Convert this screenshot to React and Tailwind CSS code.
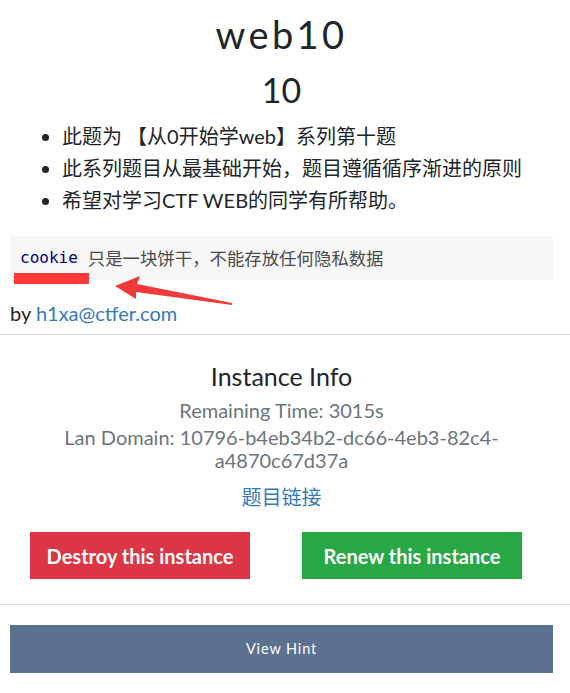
import React from 'react';

export default function App() {
  return (
    <div className="min-h-screen bg-white text-[#212529] font-['Lato','Noto_Sans_CJK_SC',sans-serif]">
      <div className="relative">
        <div className="ml-[10px] w-[543px]">
          <h1 className="text-center text-[38px] leading-[44px] pt-[12px] tracking-[0.09em] font-normal">web10</h1>
          <h2 className="text-center text-[34px] leading-[40px] mt-[14px]">10</h2>

          <ul className="list-disc pl-[52px] mt-[10px] text-[20px] leading-[32px] text-[#212529]">
            <li>此题为 【从0开始学web】系列第十题</li>
            <li>此系列题目从最基础开始，题目遵循循序渐进的原则</li>
            <li>希望对学习CTF WEB的同学有所帮助。</li>
          </ul>

          <div className="mt-[20px] bg-[#f7f7f7] h-[44px] flex items-center px-[10px]">
            <code className="font-['DejaVu_Sans_Mono',monospace] text-[#000080] text-[16px]">cookie</code>
            <span className="ml-[10px] text-[#4a4a4a] font-['Noto_Sans_CJK_SC',serif] text-[17.4px]">只是一块饼干，不能存放任何隐私数据</span>
          </div>

          <p className="mt-[21px] text-[20px] leading-[24px]">
            by <a className="text-[#337ab7]">h1xa@ctfer.com</a>
          </p>
        </div>

        {/* annotation overlay */}
        <div className="absolute left-[14px] top-[273px] w-[75px] h-[11px] bg-[#ff3838]" />
        <svg className="absolute left-0 top-0" width="570" height="340" viewBox="0 0 570 340">
          <polygon points="115,286 140,276 137,284 232,303 232,305 136,292 136,299" fill="#f03a3a" />
        </svg>
      </div>

      <div className="mt-[9px] border-t border-[#dedede]" />

      <div className="ml-[10px] w-[543px] text-center">
        <h3 className="mt-[26px] text-[25px] leading-[30px]">Instance Info</h3>
        <div className="mt-[7px] text-[20px] text-[#6c757d]">
          <p className="leading-[24px]">Remaining Time: 3015s</p>
          <p className="mt-[4px] leading-[23px] w-[460px] mx-auto">Lan Domain: 10796-b4eb34b2-dc66-4eb3-82c4-a4870c67d37a</p>
        </div>
        <p className="mt-[12px] text-[20px] leading-[26px] text-[#337ab7]">题目链接</p>
      </div>

      <div className="mt-[22px] flex pl-[30px] gap-[52px]">
        <button className="w-[220px] h-[47px] bg-[#dc3545] text-white font-bold text-[20px]">Destroy this instance</button>
        <button className="w-[220px] h-[47px] bg-[#28a745] text-white font-bold text-[20px]">Renew this instance</button>
      </div>

      <div className="mt-[25px] border-t border-[#dedede]" />

      <div className="ml-[10px] w-[543px] mt-[20px] h-[48px] bg-[#5c7090] flex items-center justify-center text-white text-[14.5px] tracking-[0.06em]">
        View Hint
      </div>
    </div>
  );
}
